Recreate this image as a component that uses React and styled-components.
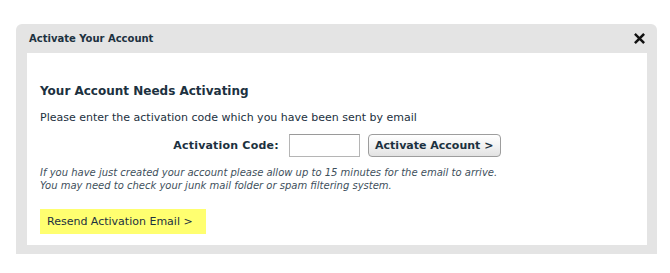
import React from "react";
import styled, { createGlobalStyle } from "styled-components";

const GlobalStyle = createGlobalStyle`
  html, body {
    margin: 0;
    padding: 0;
    background: #ffffff;
  }
  body {
    font-family: "DejaVu Sans", Verdana, sans-serif;
    color: #1c3140;
  }
`;

const Page = styled.div`
  padding: 24px 13px 0 16px;
  width: 641px;
`;

const Dialog = styled.div`
  background: #e4e4e4;
  border-radius: 6px 6px 0 0;
  padding: 0 10px 9px 11px;
  box-shadow: 0 3px 0 #a9a9a9, 0 5px 0 #ffffff, 0 6px 0 #e2e2e2;
`;

const TitleBar = styled.div`
  height: 29px;
  display: flex;
  align-items: center;
  justify-content: space-between;
  padding: 0 2px 0 2px;
`;

const Title = styled.span`
  font-size: 10px;
  font-weight: bold;
  color: #1c3140;
`;

const CloseButton = styled.button`
  width: 11px;
  height: 11px;
  padding: 0;
  border: 0;
  background: none;
  display: flex;
  cursor: pointer;
`;

const Body = styled.div`
  background: #ffffff;
  padding: 30px 13px 11px 13px;
`;

const Heading = styled.h2`
  margin: 0;
  font-size: 12px;
  line-height: 16px;
  font-weight: bold;
  color: #1c3140;
`;

const Intro = styled.p`
  margin: 12px 0 0;
  font-size: 11px;
  line-height: 14px;
`;

const CodeRow = styled.form`
  margin-top: 9px;
  display: flex;
  justify-content: center;
  align-items: center;
`;

const Label = styled.label`
  font-size: 11px;
  font-weight: bold;
  letter-spacing: 0.2px;
  margin-right: 10px;
`;

const CodeInput = styled.input`
  box-sizing: border-box;
  width: 71px;
  height: 23px;
  margin: 0 8px 0 0;
  border: 1px solid #b5b5b5;
  border-top-color: #9a9a9a;
  background: #ffffff;
  font-size: 11px;
`;

const ActivateButton = styled.button`
  box-sizing: border-box;
  width: 133px;
  height: 23px;
  border: 1px solid #9d9d9d;
  border-radius: 4px;
  background: linear-gradient(#ffffff, #f1f1f1 55%, #e2e2e2);
  font-family: inherit;
  font-size: 11px;
  font-weight: bold;
  color: #1c3140;
  cursor: pointer;
`;

const Note = styled.p`
  margin: 9px 0 0;
  font-size: 10px;
  line-height: 13px;
  font-style: italic;
  color: #3e4f5c;
`;

const ResendButton = styled.button`
  margin-top: 17px;
  height: 25px;
  width: 166px;
  padding: 0 7px;
  text-align: left;
  border: 0;
  background: #ffff70;
  font-family: inherit;
  font-size: 11px;
  color: #1c3140;
  cursor: pointer;
`;

function CloseIcon() {
  return (
    <svg width="11" height="11" viewBox="0 0 11 11">
      <path
        d="M1.8 1.8 L9.2 9.2 M9.2 1.8 L1.8 9.2"
        stroke="#111"
        strokeWidth="2.5"
        strokeLinecap="square"
      />
    </svg>
  );
}

export default function App() {
  return (
    <Page>
      <GlobalStyle />
      <Dialog>
        <TitleBar>
          <Title>Activate Your Account</Title>
          <CloseButton aria-label="Close">
            <CloseIcon />
          </CloseButton>
        </TitleBar>
        <Body>
          <Heading>Your Account Needs Activating</Heading>
          <Intro>
            Please enter the activation code which you have been sent by email
          </Intro>
          <CodeRow onSubmit={(evt) => evt.preventDefault()}>
            <Label htmlFor="code">Activation Code:</Label>
            <CodeInput id="code" type="text" />
            <ActivateButton type="submit">Activate Account &gt;</ActivateButton>
          </CodeRow>
          <Note>
            If you have just created your account please allow up to 15 minutes
            for the email to arrive.
            <br />
            You may need to check your junk mail folder or spam filtering
            system.
          </Note>
          <ResendButton>Resend Activation Email &gt;</ResendButton>
        </Body>
      </Dialog>
    </Page>
  );
}
